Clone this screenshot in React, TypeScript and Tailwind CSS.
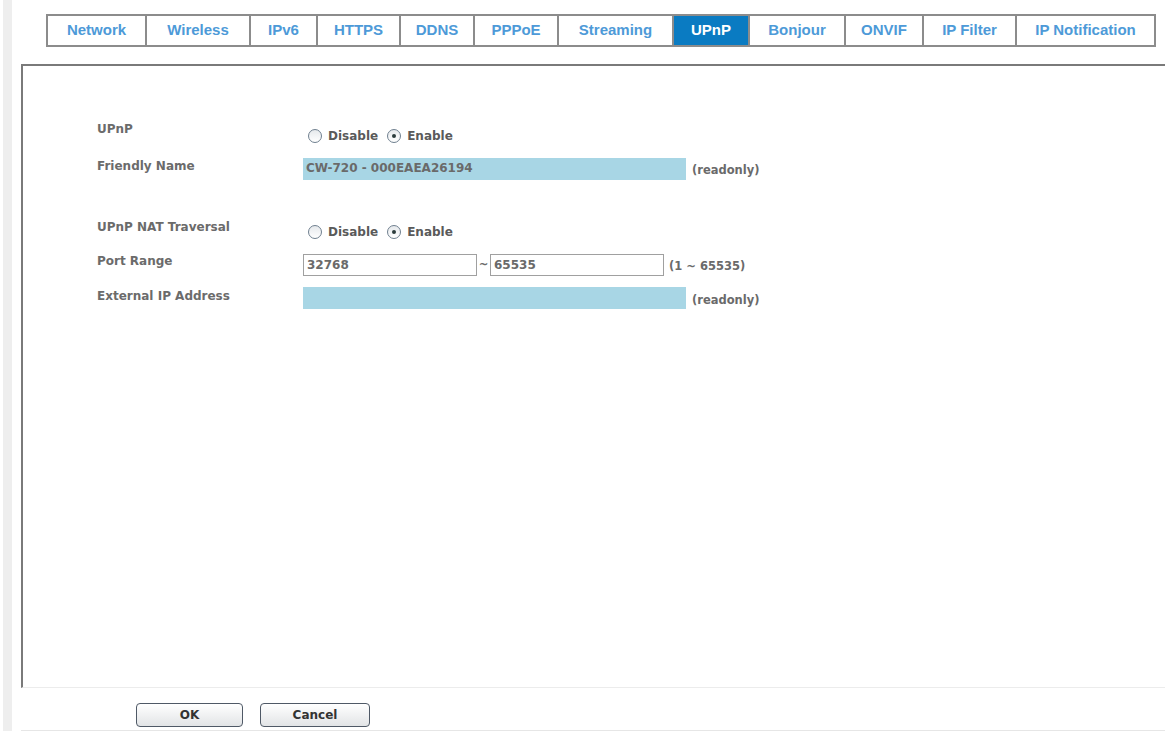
import React from "react";

const tabs = [
  { name: "Network", w: 101 },
  { name: "Wireless", w: 104 },
  { name: "IPv6", w: 67 },
  { name: "HTTPS", w: 83 },
  { name: "DDNS", w: 74 },
  { name: "PPPoE", w: 84 },
  { name: "Streaming", w: 115 },
  { name: "UPnP", w: 76 },
  { name: "Bonjour", w: 96 },
  { name: "ONVIF", w: 78 },
  { name: "IP Filter", w: 93 },
  { name: "IP Notification", w: 139 },
];

function Radio({ checked }: { checked?: boolean }) {
  return (
    <span className="relative inline-flex w-[14px] h-[14px] rounded-full border border-[#6f7f8f] bg-gradient-to-b from-[#e6e9ec] to-white items-center justify-center">
      {checked && <span className="w-[4px] h-[4px] rounded-full bg-[#2b3b3b]" />}
    </span>
  );
}

function RadioPair() {
  return (
    <div className="flex items-center h-[16px] text-[12px] font-bold text-[#5a5a5a]" style={{ fontFamily: '"DejaVu Sans", sans-serif' }}>
      <Radio />
      <span className="ml-[6px]">Disable</span>
      <span className="ml-[9px]" />
      <Radio checked />
      <span className="ml-[6px]">Enable</span>
    </div>
  );
}

const label = "w-[206px] shrink-0 h-[16px] leading-[16px] text-[12px] font-bold text-[#6b6b6b]";
const inputBase = "h-[22px] px-[3px] leading-[20px] text-[12px] font-bold text-[#6a6a6a]";

export default function App() {
  return (
    <div className="flex h-[731px] w-[1168px] bg-white overflow-hidden" style={{ fontFamily: '"DejaVu Sans", sans-serif' }}>
      <div className="w-[3px] shrink-0" />
      <div className="w-[9px] shrink-0 bg-[#eeeeee]" />
      <div className="w-[9px] shrink-0" />
      <div className="flex flex-col w-[1144px]">
        {/* Tabs */}
        <div className="flex pl-[25px] pt-[14px]">
          {tabs.map((t, i) => {
            const active = t.name === "UPnP";
            return (
              <div
                key={t.name}
                style={{ width: t.w, fontFamily: '"Liberation Sans", Arial, sans-serif' }}
                className={`h-[33px] flex items-center justify-center text-[15px] font-bold border-y-2 border-r-2 border-[#8c8c8c] ${
                  i === 0 ? "border-l-2" : ""
                } ${active ? "bg-[#0a7bc2] text-white" : "bg-white text-[#4d9ad8]"}`}
              >
                {t.name}
              </div>
            );
          })}
        </div>

        {/* Content box */}
        <div className="mt-[17px] h-[624px] border-t-2 border-l-2 border-[#7a7a7a] border-b border-b-[#ececec] pl-[74px] pt-[55px]">
          {/* UPnP */}
          <div className="flex items-start">
            <div className={label}>UPnP</div>
            <div className="mt-[7px] pl-[5px]">
              <RadioPair />
            </div>
          </div>
          {/* Friendly Name */}
          <div className="flex items-start mt-[14px]">
            <div className={label}>Friendly Name</div>
            <div className="flex items-center">
              <div className={`${inputBase} w-[383px] bg-[#a8d6e5]`}>CW-720 - 000EAEA26194</div>
              <span className="ml-[6px] mt-[4px] text-[11.5px] font-bold text-[#6a6a6a]">(readonly)</span>
            </div>
          </div>
          {/* NAT Traversal */}
          <div className="flex items-start mt-[39px]">
            <div className={label}>UPnP NAT Traversal</div>
            <div className="mt-[5px] pl-[5px]">
              <RadioPair />
            </div>
          </div>
          {/* Port Range */}
          <div className="flex items-start mt-[13px]">
            <div className={label}>Port Range</div>
            <div className="flex items-center mt-[1px]">
              <div className={`${inputBase} w-[174px] border border-[#a0a0a0] bg-white`}>32768</div>
              <span className="w-[13px] text-center text-[11.5px] font-bold text-[#6a6a6a]">~</span>
              <div className={`${inputBase} w-[174px] border border-[#a0a0a0] bg-white`}>65535</div>
              <span className="ml-[5px] mt-[3px] text-[11.5px] font-bold text-[#6a6a6a]">(1 ~ 65535)</span>
            </div>
          </div>
          {/* External IP */}
          <div className="flex items-start mt-[11px]">
            <div className={`${label} mt-[1px]`}>External IP Address</div>
            <div className="flex items-center">
              <div className={`${inputBase} w-[383px] bg-[#a8d6e5]`} />
              <span className="ml-[6px] mt-[5px] text-[11.5px] font-bold text-[#6a6a6a]">(readonly)</span>
            </div>
          </div>
        </div>

        {/* Buttons */}
        <div className="flex flex-1 pl-[115px] pt-[15px] border-b border-[#e6e6e6]">
          <button className="w-[107px] h-[24px] rounded-[4px] border border-[#4f5966] bg-gradient-to-b from-white to-[#e2e4e6] text-[12px] font-bold text-[#333]">
            OK
          </button>
          <button className="ml-[17px] w-[110px] h-[24px] rounded-[4px] border border-[#4f5966] bg-gradient-to-b from-white to-[#e2e4e6] text-[12px] font-bold text-[#333]">
            Cancel
          </button>
        </div>
      </div>
    </div>
  );
}
